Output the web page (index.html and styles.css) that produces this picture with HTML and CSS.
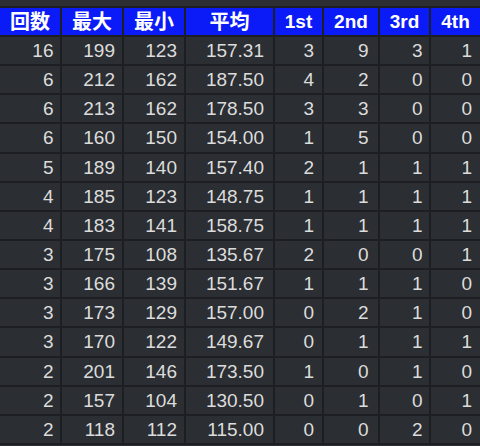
FILE: index.html
```html
<!DOCTYPE html>
<html lang="ja">
<head>
<meta charset="utf-8">
<title>成績</title>
<link rel="stylesheet" href="styles.css">
</head>
<body>
<table class="stats">
  <thead>
    <tr><th class="jp">回数</th><th class="jp">最大</th><th class="jp">最小</th><th class="jp">平均</th><th>1st</th><th>2nd</th><th>3rd</th><th>4th</th></tr>
  </thead>
  <tbody>
    <tr><td>16</td><td>199</td><td>123</td><td>157.31</td><td>3</td><td>9</td><td>3</td><td>1</td></tr>
    <tr><td>6</td><td>212</td><td>162</td><td>187.50</td><td>4</td><td>2</td><td>0</td><td>0</td></tr>
    <tr><td>6</td><td>213</td><td>162</td><td>178.50</td><td>3</td><td>3</td><td>0</td><td>0</td></tr>
    <tr><td>6</td><td>160</td><td>150</td><td>154.00</td><td>1</td><td>5</td><td>0</td><td>0</td></tr>
    <tr><td>5</td><td>189</td><td>140</td><td>157.40</td><td>2</td><td>1</td><td>1</td><td>1</td></tr>
    <tr><td>4</td><td>185</td><td>123</td><td>148.75</td><td>1</td><td>1</td><td>1</td><td>1</td></tr>
    <tr><td>4</td><td>183</td><td>141</td><td>158.75</td><td>1</td><td>1</td><td>1</td><td>1</td></tr>
    <tr><td>3</td><td>175</td><td>108</td><td>135.67</td><td>2</td><td>0</td><td>0</td><td>1</td></tr>
    <tr><td>3</td><td>166</td><td>139</td><td>151.67</td><td>1</td><td>1</td><td>1</td><td>0</td></tr>
    <tr><td>3</td><td>173</td><td>129</td><td>157.00</td><td>0</td><td>2</td><td>1</td><td>0</td></tr>
    <tr><td>3</td><td>170</td><td>122</td><td>149.67</td><td>0</td><td>1</td><td>1</td><td>1</td></tr>
    <tr><td>2</td><td>201</td><td>146</td><td>173.50</td><td>1</td><td>0</td><td>1</td><td>0</td></tr>
    <tr><td>2</td><td>157</td><td>104</td><td>130.50</td><td>0</td><td>1</td><td>0</td><td>1</td></tr>
    <tr><td>2</td><td>118</td><td>112</td><td>115.00</td><td>0</td><td>0</td><td>2</td><td>0</td></tr>
  </tbody>
</table>
</body>
</html>
```
FILE: styles.css
```css
html, body {
  margin: 0;
  padding: 0;
  background: #2b2e32;
  overflow: hidden;
}
body {
  padding-top: 6px;
}
.stats {
  table-layout: fixed;
  width: 484px;
  margin-left: -2px;
  border-collapse: separate;
  border-spacing: 2px;
  background: #1c1e21;
  font-family: "Liberation Sans", Arial, "Noto Sans CJK JP", sans-serif;
}
.stats th {
  height: 27px;
  padding: 0;
  background: #0a1bf8;
  color: #ffffff;
  font-size: 19px;
  font-weight: bold;
  text-align: center;
  vertical-align: middle;
  line-height: 1;
  box-sizing: border-box;
}
.stats th.jp {
  font-size: 20px;
}
.stats th:nth-child(1),
.stats th:nth-child(2),
.stats th:nth-child(3) { width: 60px; }
.stats th:nth-child(4) { width: 87px; }
.stats th:nth-child(5) { width: 47px; }
.stats th:nth-child(6) { width: 54px; }
.stats th:nth-child(7),
.stats th:nth-child(8) { width: 49px; }

.stats td {
  height: 27.15px;
  padding: 0 7px 0 0;
  background: #2b2e32;
  color: #dcdcdc;
  font-size: 19px;
  text-align: right;
  vertical-align: middle;
  line-height: 1;
  box-sizing: border-box;
}
.stats td:nth-child(1) { padding-right: 6.5px; }
.stats td:nth-child(4) { padding-right: 9px; }
.stats td:nth-child(5) { padding-right: 8px; }
.stats td:nth-child(6) { padding-right: 9.5px; }
.stats td:nth-child(7) { padding-right: 6.5px; }
.stats td:nth-child(8) { padding-right: 8px; }
```
